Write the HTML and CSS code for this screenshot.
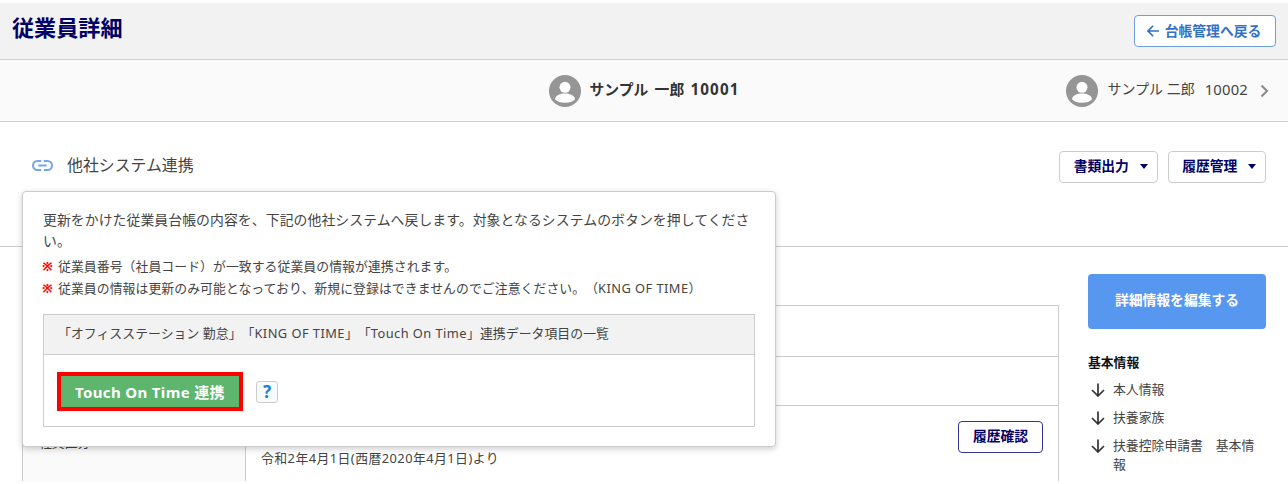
FILE: index.html
```
<!DOCTYPE html>
<html lang="ja">

<head>
    <meta charset="UTF-8">
    <meta name="viewport" content="width=device-width, initial-scale=1.0">
    <title>従業員詳細</title>
    <link rel="stylesheet" href="styles.css">
</head>

<body>
    <header class="page-header">
        <h1>従業員詳細</h1>
        <a class="btn btn-back" href="#">
            <svg width="12" height="12" viewBox="0 0 12 12"><path d="M12 6H1.2M6.2 .8L1 6l5.2 5.2"/></svg>
            台帳管理へ戻る
        </a>
    </header>

    <nav class="employee-nav">
        <div class="employee current">
            <svg class="avatar" viewBox="0 0 32 32"><circle cx="16" cy="16" r="16" fill="#959595"/><circle cx="16" cy="12.3" r="5.5" fill="#fff"/><path d="M6 24.3c0-4 5.5-5.8 10-5.8s10 1.8 10 5.8c-2 2.4-5.5 3.5-10 3.5s-8-1.1-10-3.5z" fill="#fff"/></svg>
            <span class="name">サンプル 一郎 <span class="num">10001</span></span>
        </div>
        <a class="employee next" href="#">
            <svg class="avatar" viewBox="0 0 32 32"><circle cx="16" cy="16" r="16" fill="#959595"/><circle cx="16" cy="12.3" r="5.5" fill="#fff"/><path d="M6 24.3c0-4 5.5-5.8 10-5.8s10 1.8 10 5.8c-2 2.4-5.5 3.5-10 3.5s-8-1.1-10-3.5z" fill="#fff"/></svg>
            <span class="name">サンプル 二郎</span>
            <span class="num">10002</span>
            <svg class="chevron" width="9" height="14" viewBox="0 0 9 14"><path d="M1.5 1.5L7 7l-5.5 5.5"/></svg>
        </a>
    </nav>

    <div class="toolbar">
        <div class="link-menu">
            <svg width="21" height="11" viewBox="0 0 21 11"><path d="M9.2 1H5.5a4.500 4.500 0 0 0 0 9h3.700M11.800 1h3.700a4.500 4.500 0 0 1 0 9h-3.700M6.300 5.500h8.400"/></svg>
            <span>他社システム連携</span>
        </div>
        <button class="btn btn-menu">書類出力<i class="caret"></i></button>
        <button class="btn btn-menu">履歴管理<i class="caret"></i></button>

        <div class="popup">
            <p class="lead">更新をかけた従業員台帳の内容を、下記の他社システムへ戻します。対象となるシステムのボタンを押してください。</p>
            <p class="note"><span class="mark">※</span>従業員番号（社員コード）が一致する従業員の情報が連携されます。</p>
            <p class="note"><span class="mark">※</span>従業員の情報は更新のみ可能となっており、新規に登録はできませんのでご注意ください。（<span class="en">KING OF TIME</span>）</p>
            <div class="panel">
                <div class="panel-head">「オフィスステーション 勤怠」「<span class="en">KING OF TIME</span>」「<span class="en">Touch On Time</span>」連携データ項目の一覧</div>
                <div class="panel-body">
                    <button class="btn-link">Touch On Time 連携</button>
                    <button class="btn-help">?</button>
                </div>
            </div>
        </div>
    </div>

    <main class="content">
        <table class="detail">
            <tr class="row1"><th></th><td></td></tr>
            <tr class="row2"><th></th><td></td></tr>
            <tr class="row3">
                <th>社員区分</th>
                <td>
                    <div class="cell">
                        <span class="since">令和2年4月1日(西暦2020年4月1日)より</span>
                        <button class="btn btn-history">履歴確認</button>
                    </div>
                </td>
            </tr>
        </table>

        <aside class="side">
            <button class="btn-edit">詳細情報を編集する</button>
            <h2>基本情報</h2>
            <ul>
                <li><svg class="down" viewBox="0 0 14 14"><path d="M7 .5v12M1 7l6 6 6-6"/></svg><a>本人情報</a></li>
                <li><svg class="down" viewBox="0 0 14 14"><path d="M7 .5v12M1 7l6 6 6-6"/></svg><a>扶養家族</a></li>
                <li><svg class="down" viewBox="0 0 14 14"><path d="M7 .5v12M1 7l6 6 6-6"/></svg><a>扶養控除申請書　基本情報</a></li>
            </ul>
        </aside>
    </main>
</body>

</html>
```

FILE: styles.css
```
* {
    box-sizing: border-box;
}

body {
    margin: 0;
    padding-top: 3px;
    height: 484px;
    overflow: hidden;
    font-family: "Noto Sans", "Noto Sans CJK JP", sans-serif;
    font-size: 12.85px;
    text-spacing-trim: space-all;
    color: #444444;
    background-color: #ffffff;
}

h1,
h2,
p,
ul {
    margin: 0;
    padding: 0;
}

button {
    font-family: inherit;
    padding: 0;
}

a {
    color: inherit;
    text-decoration: none;
}

svg {
    fill: none;
    flex: none;
}

.btn {
    display: flex;
    align-items: center;
    justify-content: center;
    height: 32px;
    padding-bottom: 2px;
    background-color: #ffffff;
    border: 1px solid #cccccc;
    border-radius: 4px;
    font-size: 13.8px;
    font-weight: bold;
    line-height: 20px;
    color: #000066;
}

.page-header {
    display: flex;
    justify-content: space-between;
    height: 57px;
    padding: 12px 12px 0;
    background-color: #f2f2f2;
    border-bottom: 1px solid #cccccc;
}

.page-header h1 {
    margin-top: -2px;
    font-size: 22.1px;
    line-height: 28px;
    color: #000066;
}

.btn-back {
    width: 142px;
    gap: 6px;
    padding-right: 2px;
    padding-bottom: 1px;
    border-color: #6c9fe0;
    color: #3570c8;
}

.btn-back svg {
    stroke: #3570c8;
    stroke-width: 1.6;
}

.employee-nav {
    display: grid;
    grid-template-columns: 1fr 190px 1fr;
    height: 62px;
    padding-right: 19px;
    background-color: #fafafa;
    border-bottom: 1px solid #cccccc;
    font-size: 14.8px;
    line-height: 22px;
}

.employee {
    display: flex;
    align-items: center;
    white-space: nowrap;
}

.employee .name {
    margin: -4px 0 0 9px;
}

.avatar {
    width: 32px;
    height: 32px;
}

.current {
    grid-column: 2;
    padding-left: 9px;
    font-weight: bold;
    word-spacing: 2.5px;
    color: #333333;
}

.current .num {
    font-size: 15.2px;
    letter-spacing: 1.1px;
}

.next {
    justify-content: flex-end;
}

.next .name {
    font-size: 14px;
}

.next > .num {
    margin: -4px 0 0 10px;
    letter-spacing: 0.2px;
}

.chevron {
    margin-left: 12px;
    stroke: #888888;
    stroke-width: 2;
}

.toolbar {
    position: relative;
    display: flex;
    gap: 10px;
    height: 125px;
    padding: 29px 22px 0 32px;
    border-bottom: 1px solid #cccccc;
}

.link-menu {
    display: flex;
    align-items: center;
    gap: 14px;
    height: 29px;
    margin-right: auto;
    font-size: 15.9px;
}

.link-menu span {
    margin-top: -3px;
}

.link-menu svg {
    stroke: #74a5f2;
    stroke-width: 2;
}

.btn-menu {
    width: 98.5px;
    gap: 11px;
    padding-left: 5px;
    padding-bottom: 3px;
}

.caret {
    margin-top: 1px;
    border: 4.5px solid transparent;
    border-top: 5px solid #000066;
    border-bottom: 0;
}

.popup {
    position: absolute;
    z-index: 1;
    top: 69px;
    left: 22px;
    width: 754px;
    height: 256px;
    padding: 17px 19px 0 20px;
    background-color: #ffffff;
    border: 1px solid #cccccc;
    border-radius: 4px;
    box-shadow: 0 2px 6px rgba(0, 0, 0, 0.2);
}

.lead {
    font-size: 13.87px;
    line-height: 21px;
    margin-bottom: 4px;
    letter-spacing: 0.06px;
}

.note {
    line-height: 22px;
    letter-spacing: 0.07px;
    white-space: nowrap;
}

.mark {
    margin: 0 5px 0 -1px;
    font-weight: bold;
    color: #ff0000;
}

.en {
    letter-spacing: 0.45px;
}

.panel {
    width: 712px;
    margin-top: 15px;
    height: 113px;
    border: 1px solid #cccccc;
}

.panel-head {
    height: 40px;
    padding-left: 14px;
    line-height: 36px;
    letter-spacing: 0.06px;
    background-color: #f2f2f2;
    border-bottom: 1px solid #cccccc;
    white-space: nowrap;
}

.panel-body {
    display: flex;
    align-items: center;
    gap: 13px;
    padding: 17px 13px;
}

.btn-link {
    width: 186px;
    height: 39px;
    background-color: #5eb56e;
    border: 4px solid #ff0000;
    font-size: 15px;
    font-weight: bold;
    letter-spacing: 0.35px;
    color: #ffffff;
    white-space: nowrap;
}

.btn-help {
    width: 22px;
    height: 22px;
    background-color: #f8fafc;
    border: 1px solid #cccccc;
    border-radius: 3px;
    font-size: 17px;
    font-weight: bold;
    line-height: 18px;
    color: #1482d8;
}

.content {
    display: flex;
    height: 234px;
    overflow: hidden;
    padding-left: 22px;
}

.detail {
    width: 1037px;
    height: 176px;
    margin: 58px 29px 0 0;
    border-collapse: collapse;
    table-layout: fixed;
    flex: none;
}

.detail th,
.detail td {
    padding: 0 15px;
    border: 1px solid #cccccc;
}

.detail th {
    width: 223px;
    padding-left: 16px;
    background-color: #fafafa;
    font-weight: normal;
    text-align: left;
}

.row1 {
    height: 51px;
}

.row2 {
    height: 49px;
}

.row3 {
    height: 76px;
}

.detail .row3 th,
.detail .row3 td {
    border-bottom: 0;
}

.detail .row3 th {
    padding-bottom: 4px;
}

.cell {
    display: flex;
    justify-content: space-between;
    height: 46px;
}

.since {
    align-self: flex-end;
    line-height: 18px;
    letter-spacing: 0.45px;
}

.btn-history {
    width: 85px;
    border-color: #333388;
}

.side {
    width: 178px;
    padding-top: 27px;
}

.btn-edit {
    width: 178px;
    height: 55px;
    padding-bottom: 5px;
    background-color: #5897f0;
    border: 0;
    border-radius: 4px;
    font-size: 13.8px;
    font-weight: bold;
    color: #ffffff;
}

.side h2 {
    margin: 23px 0 8px;
    font-size: 12.8px;
    line-height: 20px;
    color: #111111;
}

.side li {
    display: flex;
    gap: 8px;
    padding-left: 3px;
    margin-bottom: 9px;
    line-height: 19px;
    list-style: none;
}

.down {
    width: 14px;
    height: 14px;
    margin-top: 3px;
    stroke: #333333;
    stroke-width: 1.7;
}
```
